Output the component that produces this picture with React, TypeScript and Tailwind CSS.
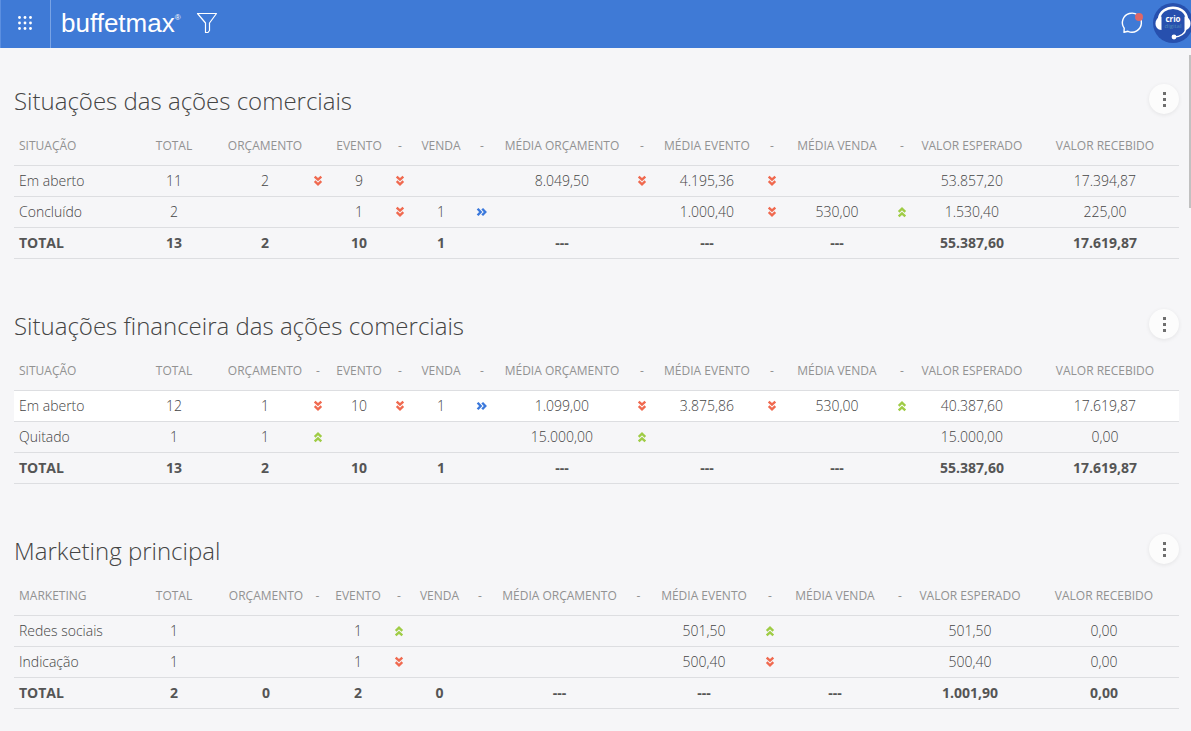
import clsx from "clsx";

type Trend = "up" | "down" | "same";

interface Report {
  title: string;
  widths: number[];
  head: string[];
  rows: string[][];
  total: string[];
  activeRow?: number;
}

// "down", "up" and "same" cells are drawn as arrows
const REPORTS: Report[] = [
  {
    title: "Situações das ações comerciais",
    widths: [111, 98, 84, 22, 60, 22, 60, 22, 138, 22, 108, 22, 108, 22, 118, 148],
    head: ["Situação", "Total", "Orçamento", "", "Evento", "-", "Venda", "-", "Média orçamento", "-", "Média evento", "-", "Média venda", "-", "Valor esperado", "Valor recebido"],
    rows: [
      ["Em aberto", "11", "2", "down", "9", "down", "", "", "8.049,50", "down", "4.195,36", "down", "", "", "53.857,20", "17.394,87"],
      ["Concluído", "2", "", "", "1", "down", "1", "same", "", "", "1.000,40", "down", "530,00", "up", "1.530,40", "225,00"],
    ],
    total: ["TOTAL", "13", "2", "", "10", "", "1", "", "---", "", "---", "", "---", "", "55.387,60", "17.619,87"],
  },
  {
    title: "Situações financeira das ações comerciais",
    widths: [111, 98, 84, 22, 60, 22, 60, 22, 138, 22, 108, 22, 108, 22, 118, 148],
    head: ["Situação", "Total", "Orçamento", "-", "Evento", "-", "Venda", "-", "Média orçamento", "-", "Média evento", "-", "Média venda", "-", "Valor esperado", "Valor recebido"],
    rows: [
      ["Em aberto", "12", "1", "down", "10", "down", "1", "same", "1.099,00", "down", "3.875,86", "down", "530,00", "up", "40.387,60", "17.619,87"],
      ["Quitado", "1", "1", "up", "", "", "", "", "15.000,00", "up", "", "", "", "", "15.000,00", "0,00"],
    ],
    total: ["TOTAL", "13", "2", "", "10", "", "1", "", "---", "", "---", "", "---", "", "55.387,60", "17.619,87"],
    activeRow: 0,
  },
  {
    title: "Marketing principal",
    widths: [109, 102, 82, 21, 60, 22, 59, 22, 137, 21, 110, 22, 108, 22, 118, 150],
    head: ["Marketing", "Total", "Orçamento", "-", "Evento", "-", "Venda", "-", "Média orçamento", "-", "Média evento", "-", "Média venda", "-", "Valor esperado", "Valor recebido"],
    rows: [
      ["Redes sociais", "1", "", "", "1", "up", "", "", "", "", "501,50", "up", "", "", "501,50", "0,00"],
      ["Indicação", "1", "", "", "1", "down", "", "", "", "", "500,40", "down", "", "", "500,40", "0,00"],
    ],
    total: ["TOTAL", "2", "0", "", "2", "", "0", "", "---", "", "---", "", "---", "", "1.001,90", "0,00"],
  },
];

const TREND_STYLE: Record<Trend, string> = {
  up: "-rotate-90 text-[#9fcc45]",
  down: "rotate-90 text-[#f0694f]",
  same: "text-[#3a78dc]",
};

const CELL = "border-b border-[#dddee1] p-0 whitespace-nowrap first:pl-[5px] first:text-left";

function TrendIcon({ trend }: { trend: Trend }) {
  return (
    <svg viewBox="0 0 12 12" className={clsx("mx-auto mb-px block size-3", TREND_STYLE[trend])} fill="none" stroke="currentColor" strokeWidth="2.4">
      <path d="M1.600 2.700l3.100 3.300-3.100 3.300M6.200 2.700l3.100 3.300-3.100 3.300" />
    </svg>
  );
}

function Cell({ value }: { value: string }) {
  if (value === "up" || value === "down" || value === "same") return <TrendIcon trend={value} />;
  return <>{value}</>;
}

function ReportTable({ report }: { report: Report }) {
  const { title, widths, head, rows, total, activeRow } = report;
  const sum = widths.reduce((a, b) => a + b, 0);

  return (
    <section>
      <div className="mb-[10px] flex h-[34px] items-center justify-between">
        <h2 className="pt-1 text-2xl leading-[34px] font-light text-[#444]">{title}</h2>
        <button
          type="button"
          aria-label={`Opções de ${title}`}
          className="flex size-[30px] flex-col items-center justify-center gap-[3px] rounded-full bg-[#fcfcfc] shadow-[0_1px_4px_rgba(0,0,0,0.08)]"
        >
          <span className="size-[3px] bg-[#6e6e6e]" />
          <span className="size-[3px] bg-[#6e6e6e]" />
          <span className="size-[3px] bg-[#6e6e6e]" />
        </button>
      </div>

      <table className="w-full table-fixed border-separate border-spacing-0 text-center text-sm font-light">
        <colgroup>
          {widths.map((w, i) => (
            <col key={i} style={{ width: `${(w / sum) * 100}%` }} />
          ))}
        </colgroup>
        <thead>
          <tr className="h-10 text-xs text-[#929292] uppercase">
            {head.map((label, i) => (
              <th key={i} scope="col" className={clsx(CELL, "font-normal")}>
                {label}
              </th>
            ))}
          </tr>
        </thead>
        <tbody className="text-[#444]">
          {rows.map((row, r) => (
            <tr key={r} className={clsx("h-[31px]", r === activeRow && "bg-white")}>
              {row.map((value, i) => (
                <td key={i} className={CELL}>
                  <Cell value={value} />
                </td>
              ))}
            </tr>
          ))}
        </tbody>
        <tfoot>
          <tr className="h-[31px] font-bold">
            {total.map((value, i) => (
              <td key={i} className={CELL}>
                {value}
              </td>
            ))}
          </tr>
        </tfoot>
      </table>
    </section>
  );
}

function Header() {
  return (
    <header className="flex h-12 overflow-hidden bg-[#3f7ad6] text-white">
      <button type="button" aria-label="Menu" className="flex w-[51px] items-center justify-center border-x border-r-[#79a3e5] border-l-[#5c8fe0] pr-px pb-[2px]">
        <svg viewBox="0 0 16 16" className="size-4" fill="currentColor">
          {[2.5, 8, 13.5].map((y) => [2.5, 8, 13.5].map((x) => <circle key={`${x}-${y}`} cx={x} cy={y} r="1.4" />))}
        </svg>
      </button>

      <div className="flex flex-1 items-center pb-[2px]">
        <a href="#" className="ml-[10px] flex items-start font-['Liberation_Sans',sans-serif] text-[26px] leading-[30px]">
          buffetmax<span className="text-[8px] leading-[20px]">®</span>
        </a>

        <button type="button" aria-label="Filtrar" className="ml-[15px]">
          <svg viewBox="0 0 22 22" className="size-[22px]" fill="none" stroke="currentColor" strokeWidth="1.2" strokeLinejoin="round">
            <path d="M1.500 1.500h19L13.500 11v7.500l-1.500 2H9.500V11z" />
          </svg>
        </button>

        <button type="button" aria-label="Mensagens" className="ml-auto">
          <svg viewBox="0 0 24 24" className="size-6" fill="none">
            <path d="M4.200 17.200A9.500 9.500 0 1 1 8 20.300L4 21.300z" stroke="currentColor" strokeWidth="1.400" strokeLinejoin="round" />
            <circle cx="19" cy="6" r="4" fill="#df6767" />
          </svg>
        </button>

        <button type="button" aria-label="Crio Digital" className="-mr-[2px] ml-[9px]">
          <svg viewBox="0 0 40 40" className="size-10">
            <circle cx="20" cy="20" r="20" fill="#2750ae" />
            <path d="M6 16C8 1 32 1 34 16" fill="none" stroke="#fff" strokeWidth="2.600" />
            <path d="M8.500 13.500v13.500C4.500 27 2.500 24 2.500 20.500s2-6.500 6-7z" fill="#fff" />
            <path d="M31.500 13.500v13.500c4 0 6-3 6-6.500s-2-6.500-6-7z" fill="#fff" />
            <path d="M33 26c-1 4-5 8-12 8" fill="none" stroke="#fff" strokeWidth="1.500" />
            <circle cx="21" cy="34" r="2.400" fill="#fff" />
            <text x="20" y="19" textAnchor="middle" className="font-['Open_Sans',sans-serif] text-[8px] font-bold" fill="#fff">crio</text>
            <text x="20" y="25" textAnchor="middle" className="font-['Open_Sans',sans-serif] text-[6px]" fill="#4f88b8">digital</text>
          </svg>
        </button>
      </div>
    </header>
  );
}

export default function App() {
  return (
    <div className="relative min-h-screen bg-[#f6f6f8] font-['Open_Sans',sans-serif] text-[#555]">
      <Header />
      <main className="flex flex-col gap-12 pt-[34px] pr-3 pb-[22px] pl-[14px]">
        {REPORTS.map((report) => (
          <ReportTable key={report.title} report={report} />
        ))}
      </main>
      {/* Scroll thumb */}
      <div className="absolute top-[55px] right-0 h-[153px] w-[2px] bg-[#c1c1c1]" />
    </div>
  );
}
